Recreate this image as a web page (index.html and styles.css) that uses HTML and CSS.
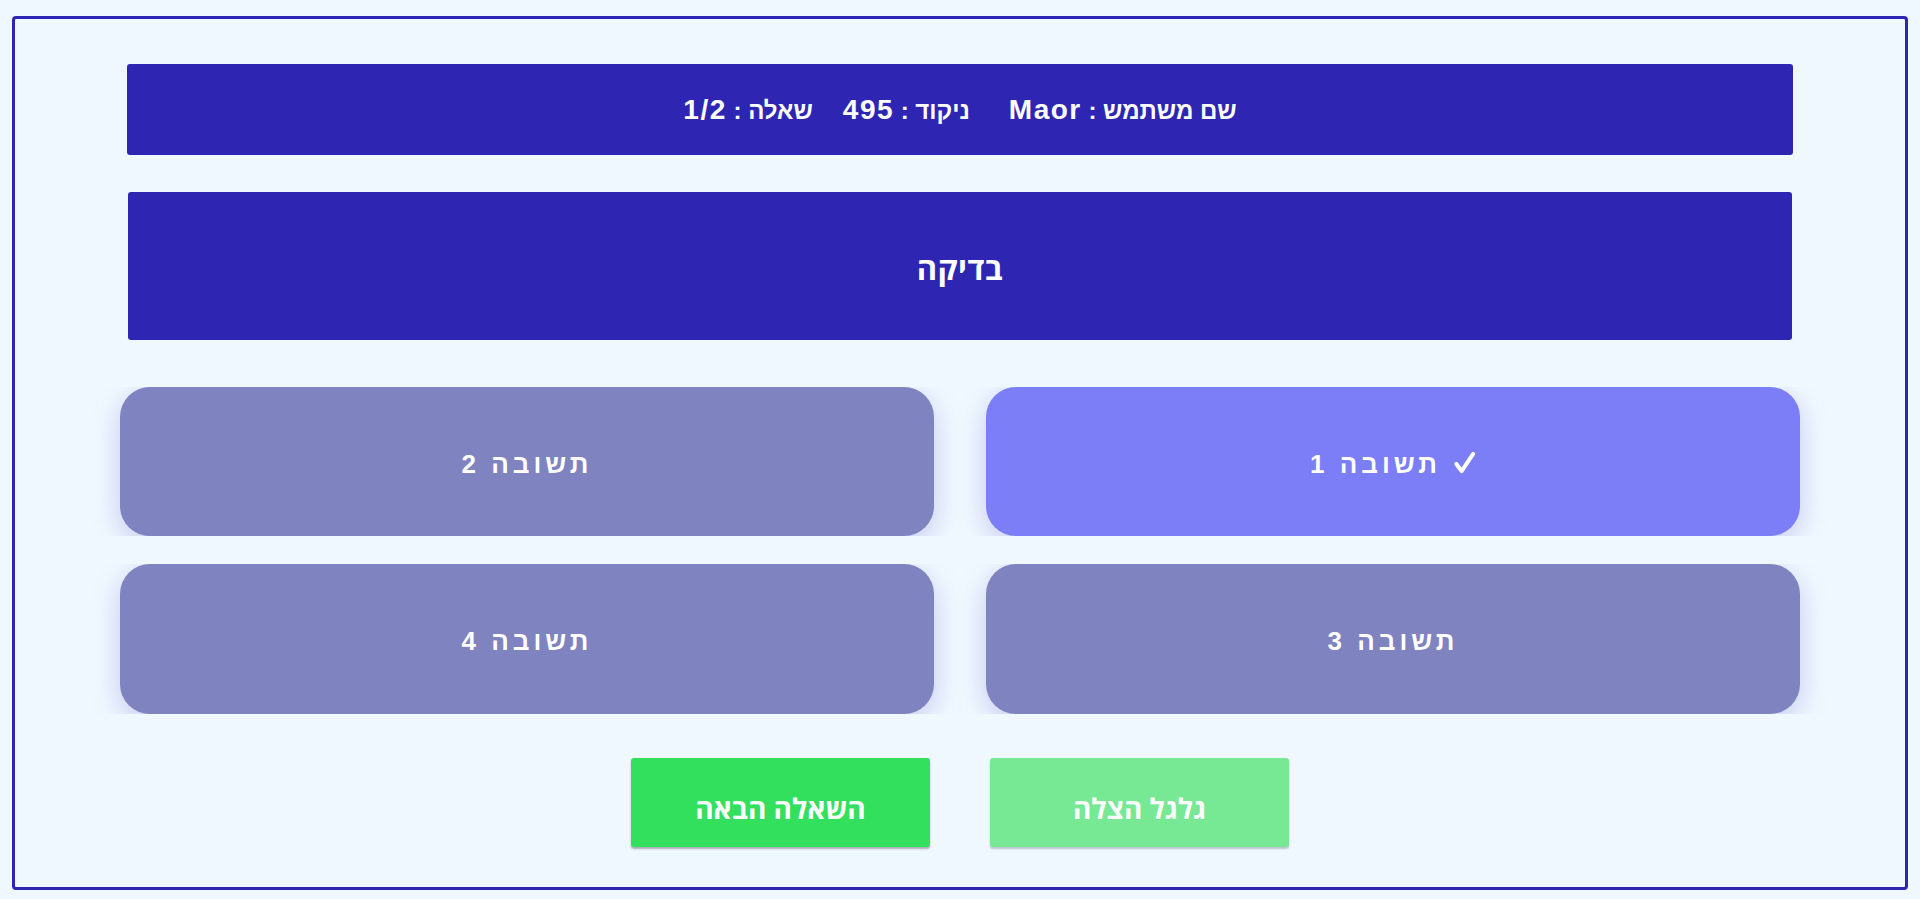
FILE: index.html
```html
<!DOCTYPE html>
<html lang="he" dir="rtl">
<head>
<meta charset="utf-8">
<title>Quiz</title>
<link rel="stylesheet" href="styles.css">
</head>
<body>
<div class="frame">
  <div class="status">
    <span class="stat stat-user">שם משתמש : <span class="latin">Maor</span></span>
    <span class="stat">ניקוד : <span class="latin">495</span></span>
    <span class="stat">שאלה : <span class="latin">1/2</span></span>
  </div>
  <div class="question">בדיקה</div>
  <div class="answers-row">
    <div class="answer selected"><svg class="check" viewBox="0 0 24 24" aria-hidden="true"><path d="M3.5 13.5 L9 21 L21 3" fill="none" stroke="#fff" stroke-width="4.2" stroke-linecap="round" stroke-linejoin="round"/></svg>תשובה 1</div>
    <div class="answer">תשובה 2</div>
  </div>
  <div class="answers-row second">
    <div class="answer">תשובה 3</div>
    <div class="answer">תשובה 4</div>
  </div>
  <div class="actions">
    <button class="btn btn-disabled">גלגל הצלה</button>
    <button class="btn">השאלה הבאה</button>
  </div>
</div>
</body>
</html>
```
FILE: styles.css
```css
html, body {
  margin: 0;
  padding: 0;
  background: #f0f8ff;
}
body {
  direction: rtl;
  font-family: "Liberation Sans", Arial, sans-serif;
  overflow: hidden;
}
.frame {
  box-sizing: border-box;
  margin: 16px 12px 9px;
  height: 874px;
  border: 3px solid #2e26b3;
  border-radius: 4px;
  padding: 45px 0 40px;
  display: flex;
  flex-direction: column;
  align-items: center;
}
.status {
  width: 1666px;
  height: 91px;
  flex: none;
  background: #2e26b3;
  border-radius: 3px;
  color: #fff;
  font-weight: bold;
  font-size: 24px;
  display: flex;
  justify-content: center;
  align-items: center;
  gap: 30px;
  margin-bottom: 37px;
}
.stat-user {
  margin-left: 9px;
}
.latin {
  font-size: 28px;
  letter-spacing: 1.5px;
}
.question {
  width: 1664px;
  height: 148px;
  flex: none;
  box-sizing: border-box;
  padding-top: 4px;
  background: #2e26b3;
  border-radius: 3px;
  color: #fff;
  font-family: "Open Sans", "Liberation Sans", sans-serif;
  font-weight: bold;
  font-size: 31px;
  letter-spacing: 0.5px;
  display: flex;
  justify-content: center;
  align-items: center;
  margin-bottom: 47px;
}
.answers-row {
  width: 1752px;
  height: 149px;
  flex: none;
  display: flex;
  justify-content: center;
  gap: 52px;
  overflow: hidden;
  margin-bottom: 28px;
}
.answers-row.second {
  height: 150px;
  margin-bottom: 44px;
}
.answer {
  width: 814px;
  height: 100%;
  box-sizing: border-box;
  padding-top: 5px;
  background: #7f83c0;
  border-radius: 30px;
  box-shadow: 0 8px 28px rgba(70, 70, 200, 0.25);
  color: #fff;
  font-weight: bold;
  font-size: 26px;
  letter-spacing: 4px;
  display: flex;
  justify-content: center;
  align-items: center;
}
.answer.selected {
  background: #7b7ef7;
}
.check {
  width: 23px;
  height: 25px;
  margin-left: 12px;
  margin-top: -3px;
  flex: none;
}
.actions {
  display: flex;
  gap: 60px;
  height: 89px;
  flex: none;
}
.btn {
  width: 299px;
  height: 89px;
  border: none;
  border-radius: 3px;
  background: #32e05e;
  color: #fff;
  font-family: "Open Sans", "Liberation Sans", sans-serif;
  font-weight: bold;
  font-size: 28px;
  box-shadow: 0 2px 2px rgba(0, 0, 0, 0.3);
  padding: 10px 0 0;
}
.btn-disabled {
  background: #77e894;
  box-shadow: 0 2px 2px rgba(0, 0, 0, 0.22);
}
```
